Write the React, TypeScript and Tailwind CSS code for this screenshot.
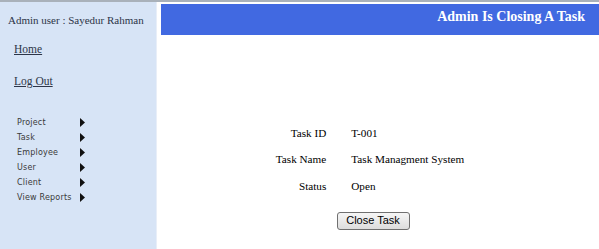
import React from 'react';

// Menu items in the sidebar.
const menuItems = ['Project', 'Task', 'Employee', 'User', 'Client', 'View Reports'];

// Rows of the task detail table.
const taskRows = [
    { label: 'Task ID', value: 'T-001' },
    { label: 'Task Name', value: 'Task Managment System' },
    { label: 'Status', value: 'Open' },
];

const Arrow = () => (
    <svg width="5" height="9" viewBox="0 0 5 9" className="block">
        <path d="M0 0 L5 4.5 L0 9 Z" fill="#111" />
    </svg>
);

const App: React.FC = () => {
    return (
        <div className="w-[599px] h-[249px] bg-white border-t-2 border-[#a9b1ba] flex overflow-hidden font-['Liberation_Serif',serif]">
            {/* Sidebar */}
            <aside className="w-[157px] h-full bg-[#d7e4f6] border-r border-[#e8eef8] flex flex-col">
                <div className="pl-[8px] pt-[13px] text-[11px] text-[#2d3548] leading-none">Admin user : Sayedur Rahman</div>
                <a href="#" className="ml-[14px] mt-[18px] text-[11.5px] text-[#2d3548] underline leading-none w-fit">Home</a>
                <a href="#" className="ml-[14px] mt-[20px] text-[11.5px] text-[#2d3548] underline leading-none w-fit">Log Out</a>
                <ul className="mt-[28px] ml-[17px] flex flex-col">
                    {menuItems.map((item) => (
                        <li key={item} className="h-[15px] flex items-center text-[8px] text-[#3a3a3a] font-['DejaVu_Sans',sans-serif] tracking-[0.2px]">
                            <span className="w-[63px]">{item}</span>
                            <Arrow />
                        </li>
                    ))}
                </ul>
            </aside>

            {/* Main content */}
            <main className="flex-1 pl-[4px] pt-[2px] flex flex-col">
                <div className="h-[31px] bg-[#4169e1] flex items-start justify-end pr-[14px] pt-[6px]">
                    <h1 className="text-white font-bold text-[14px] leading-none">Admin Is Closing A Task</h1>
                </div>
                <div className="mt-[85px] flex flex-col items-center">
                    <table className="text-[11.2px] text-black ml-[-20px]">
                        <tbody>
                            {taskRows.map((row) => (
                                <tr key={row.label} className="h-[26.5px]">
                                    <td className="text-right pr-[25px]">{row.label}</td>
                                    <td>{row.value}</td>
                                </tr>
                            ))}
                        </tbody>
                    </table>
                    <button className="mt-[12px] ml-[-14px] w-[73px] h-[18px] border border-[#707070] rounded-[3px] bg-gradient-to-b from-[#f6f6f6] to-[#dddddd] text-[11px] leading-none text-black font-['Liberation_Sans',sans-serif]">
                        Close Task
                    </button>
                </div>
            </main>
        </div>
    );
};

export default App;
